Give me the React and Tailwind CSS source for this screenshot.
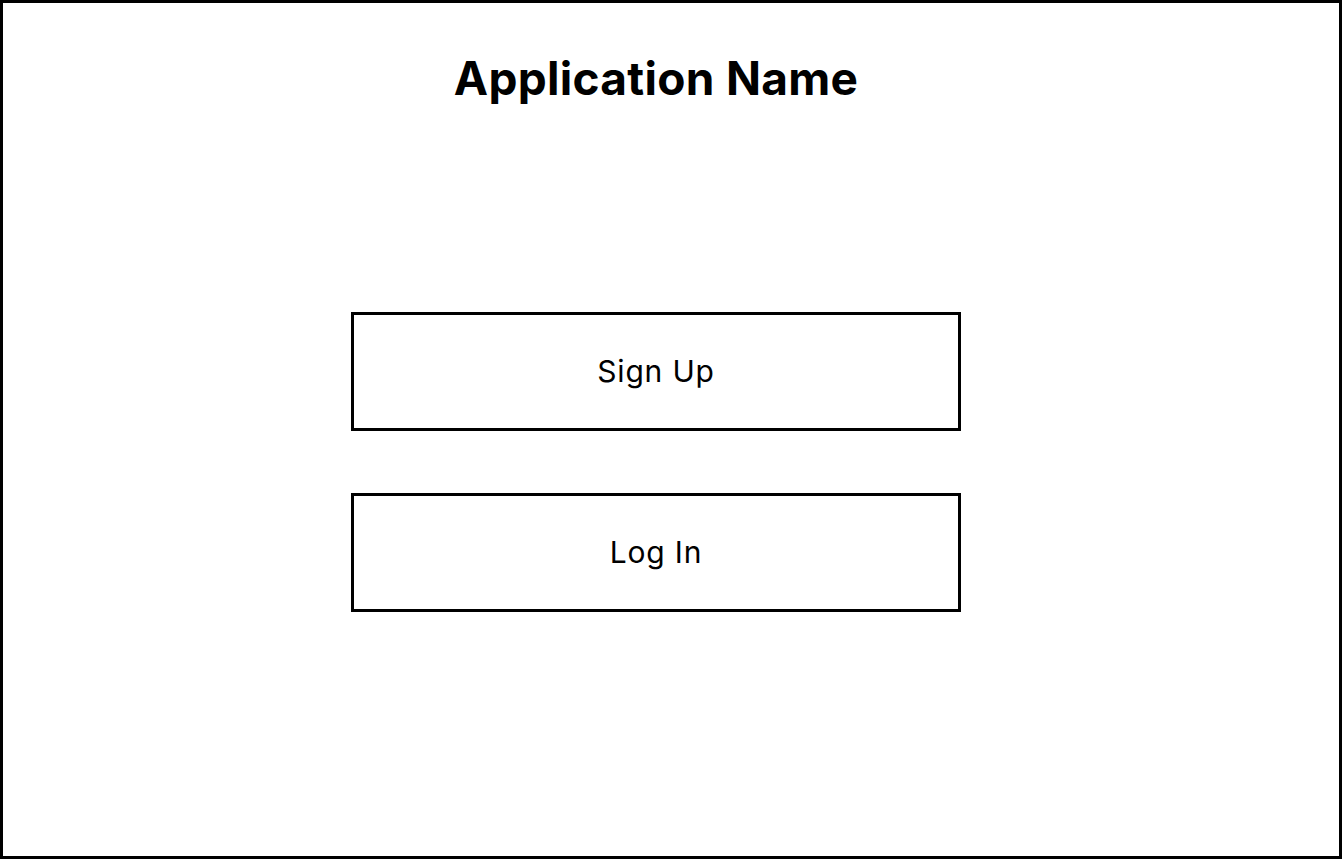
function App() {
  return (
    <div
      className="h-screen w-full border-[3px] border-black bg-white flex flex-col items-center pr-[30px] text-black"
      style={{ fontFamily: "Inter, 'Liberation Sans', sans-serif" }}
    >
      <h1 className="mt-[46px] text-[46px] leading-[58px] font-bold tracking-[0.3px]">
        Application Name
      </h1>
      <div className="mt-[205px] flex flex-col gap-[62px]">
        <button className="w-[610px] h-[119px] border-[3px] border-black text-[30px] tracking-[0.8px] font-normal">
          Sign Up
        </button>
        <button className="w-[610px] h-[119px] border-[3px] border-black text-[30px] tracking-[0.8px] font-normal">
          Log In
        </button>
      </div>
    </div>
  );
}

export default App;
